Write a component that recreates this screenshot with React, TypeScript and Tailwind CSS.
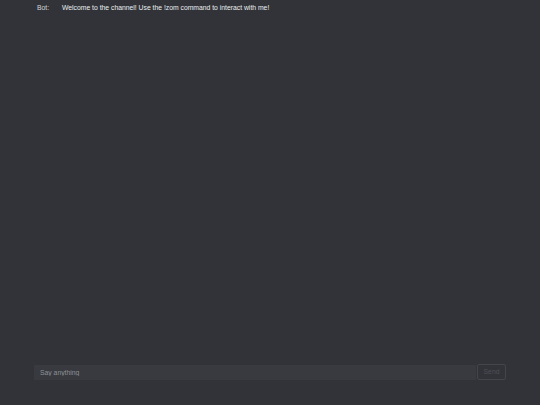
export default function App() {
  return (
    <div
      className="flex flex-col h-screen w-full bg-[#313338] text-[#dbdee1]"
      style={{ fontFamily: '"Liberation Sans", Arial, sans-serif' }}
    >
      <div className="flex-1 pl-[37px] pt-[3px]">
        <div className="flex text-[6.8px] leading-[9px]">
          <span className="w-[25px] text-[#d4d6da]">Bot:</span>
          <span className="text-[#eceef0]">Welcome to the channel! Use the !zom command to interact with me!</span>
        </div>
      </div>
      <div className="flex items-center pl-[34px] pr-[34px] pb-[25px]">
        <input
          className="flex-1 h-[15px] bg-[#383a40] px-[6px] text-[6.8px] text-[#dbdee1] placeholder:text-[#8e9297] outline-none"
          placeholder="Say anything"
        />
        <button className="ml-px h-[16px] w-[29px] rounded-[2px] border border-[#43454b] text-[6.8px] text-[#4e5058]">
          Send
        </button>
      </div>
    </div>
  );
}
